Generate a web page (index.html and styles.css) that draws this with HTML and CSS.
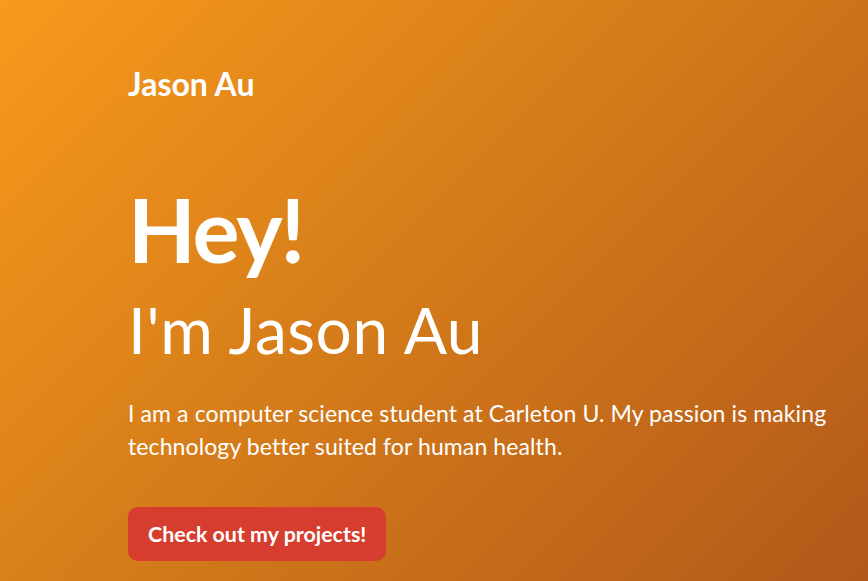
FILE: index.html
```html
<!DOCTYPE html>
<html lang="en">
<head>
<meta charset="utf-8">
<title>Jason Au</title>
<link rel="stylesheet" href="styles.css">
</head>
<body>
<div class="page">
  <header class="nav">
    <div class="logo">Jason Au</div>
  </header>
  <main class="hero">
    <h1 class="hey">Hey!</h1>
    <h2 class="name">I'm Jason Au</h2>
    <p class="intro">I am a computer science student at Carleton U. My passion is making technology better suited for human health.</p>
    <a class="cta" href="#projects">Check out my projects!</a>
  </main>
</div>
</body>
</html>
```
FILE: styles.css
```css
html, body {
  margin: 0;
  padding: 0;
  height: 100%;
}
body {
  font-family: "Lato", "Liberation Sans", sans-serif;
  color: #fff;
  background: linear-gradient(135deg, #f89a1c 0%, #d9801a 40%, #b2581a 100%);
  overflow: hidden;
}
.page {
  height: 100%;
  padding: 0 30px 0 128px;
  box-sizing: border-box;
  display: flex;
  flex-direction: column;
}
.nav {
  padding-top: 64px;
}
.logo {
  font-size: 32px;
  font-weight: 700;
  letter-spacing: 0;
  line-height: 40px;
}
.hero {
  display: flex;
  flex-direction: column;
  align-items: flex-start;
  padding-top: 80px;
}
.hey {
  margin: 0;
  font-size: 88px;
  font-weight: 700;
  line-height: 90px;
  letter-spacing: -2px;
}
.name {
  margin: 21px 0 0;
  font-size: 64px;
  font-weight: 400;
  line-height: 70px;
  letter-spacing: 0.6px;
}
.intro {
  margin: 32px 0 0;
  font-size: 23px;
  line-height: 33px;
  letter-spacing: 0.11px;
  max-width: 720px;
}
.cta {
  margin-top: 44px;
  display: inline-block;
  background: #d63d2e;
  color: #fff;
  text-decoration: none;
  font-size: 21.4px;
  font-weight: 700;
  line-height: 24px;
  padding: 15px 20px;
  border-radius: 10px;
}
```
